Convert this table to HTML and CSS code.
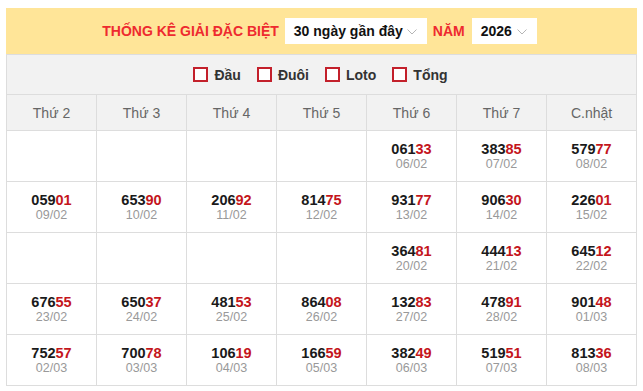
FILE: index.html
```html
<!DOCTYPE html>
<html lang="vi">
<head>
<meta charset="utf-8">
<link rel="stylesheet" href="styles.css">
</head>
<body>
<div class="box">
  <div class="topbar">
    <span class="title">THỐNG KÊ GIẢI ĐẶC BIỆT</span>
    <div class="select sel-range"><span>30 ngày gần đây</span><svg class="chev" width="10" height="6" viewBox="0 0 10 6"><path d="M0.5 0.5 L5 5 L9.5 0.5" fill="none" stroke="#b5b5b5" stroke-width="1"/></svg></div>
    <span class="title">NĂM</span>
    <div class="select sel-year"><span>2026</span><svg class="chev" width="10" height="6" viewBox="0 0 10 6"><path d="M0.5 0.5 L5 5 L9.5 0.5" fill="none" stroke="#b5b5b5" stroke-width="1"/></svg></div>
  </div>
  <div class="filters">
    <label class="chk"><span class="sq"></span>Đầu</label>
    <label class="chk"><span class="sq"></span>Đuôi</label>
    <label class="chk"><span class="sq"></span>Loto</label>
    <label class="chk"><span class="sq"></span>Tổng</label>
  </div>
  <div class="grid">
    <div class="hd">Thứ 2</div><div class="hd">Thứ 3</div><div class="hd">Thứ 4</div><div class="hd">Thứ 5</div><div class="hd">Thứ 6</div><div class="hd">Thứ 7</div><div class="hd">C.nhật</div>

    <div class="c"></div><div class="c"></div><div class="c"></div><div class="c"></div>
    <div class="c"><b>061<i>33</i></b><span>06/02</span></div>
    <div class="c"><b>383<i>85</i></b><span>07/02</span></div>
    <div class="c"><b>579<i>77</i></b><span>08/02</span></div>

    <div class="c"><b>059<i>01</i></b><span>09/02</span></div>
    <div class="c"><b>653<i>90</i></b><span>10/02</span></div>
    <div class="c"><b>206<i>92</i></b><span>11/02</span></div>
    <div class="c"><b>814<i>75</i></b><span>12/02</span></div>
    <div class="c"><b>931<i>77</i></b><span>13/02</span></div>
    <div class="c"><b>906<i>30</i></b><span>14/02</span></div>
    <div class="c"><b>226<i>01</i></b><span>15/02</span></div>

    <div class="c"></div><div class="c"></div><div class="c"></div><div class="c"></div>
    <div class="c"><b>364<i>81</i></b><span>20/02</span></div>
    <div class="c"><b>444<i>13</i></b><span>21/02</span></div>
    <div class="c"><b>645<i>12</i></b><span>22/02</span></div>

    <div class="c"><b>676<i>55</i></b><span>23/02</span></div>
    <div class="c"><b>650<i>37</i></b><span>24/02</span></div>
    <div class="c"><b>481<i>53</i></b><span>25/02</span></div>
    <div class="c"><b>864<i>08</i></b><span>26/02</span></div>
    <div class="c"><b>132<i>83</i></b><span>27/02</span></div>
    <div class="c"><b>478<i>91</i></b><span>28/02</span></div>
    <div class="c"><b>901<i>48</i></b><span>01/03</span></div>

    <div class="c"><b>752<i>57</i></b><span>02/03</span></div>
    <div class="c"><b>700<i>78</i></b><span>03/03</span></div>
    <div class="c"><b>106<i>19</i></b><span>04/03</span></div>
    <div class="c"><b>166<i>59</i></b><span>05/03</span></div>
    <div class="c"><b>382<i>49</i></b><span>06/03</span></div>
    <div class="c"><b>519<i>51</i></b><span>07/03</span></div>
    <div class="c"><b>813<i>36</i></b><span>08/03</span></div>
  </div>
</div>
</body>
</html>
```

FILE: styles.css
```css
* { box-sizing: border-box; }
html, body { margin: 0; padding: 0; background: #fff; }
body {
  font-family: "Liberation Sans", Arial, sans-serif;
  padding: 8px 6px 0 6px;
}
.box { width: 631px; }
.topbar {
  height: 46px;
  background: #ffe598;
  display: flex;
  align-items: center;
  justify-content: center;
  gap: 6px;
  padding-right: 4px;
}
.title {
  color: #ee2a2f;
  font-weight: bold;
  font-size: 14px;
}
.select {
  height: 26px;
  background: #fff;
  display: flex;
  align-items: center;
  justify-content: space-between;
  font-weight: bold;
  font-size: 14px;
  color: #111;
  padding: 0 10px 0 9px;
}
.sel-range { width: 142px; }
.sel-year { width: 65px; margin-left: 1px; }
.chev { display: block; margin-top: 1px; }
.filters {
  height: 40px;
  background: #f2f2f2;
  border: 1px solid #dddddd;
  border-bottom: none;
  display: flex;
  align-items: center;
  justify-content: center;
  gap: 16px;
  padding-right: 2px;
}
.chk {
  display: flex;
  align-items: center;
  gap: 6px;
  font-weight: bold;
  font-size: 14px;
  color: #333;
}
.sq {
  width: 15px;
  height: 15px;
  border: 2px solid #c3202b;
  background: #fff;
}
.grid {
  display: grid;
  grid-template-columns: repeat(7, 90px);
  border-top: 1px solid #dddddd;
  border-left: 1px solid #dddddd;
}
.hd {
  height: 36px;
  background: #f2f2f2;
  border-right: 1px solid #dddddd;
  border-bottom: 1px solid #dddddd;
  display: flex;
  align-items: center;
  justify-content: center;
  font-size: 14px;
  color: #666;
}
.c {
  height: 51px;
  border-right: 1px solid #dddddd;
  border-bottom: 1px solid #dddddd;
  display: flex;
  flex-direction: column;
  align-items: center;
  justify-content: center;
  background: #fff;
}
.c b {
  font-size: 14.5px;
  font-weight: bold;
  color: #1a1a1a;
  line-height: 16px;
}
.c i {
  font-style: normal;
  color: #c4161c;
}
.c span {
  font-size: 12.5px;
  color: #999;
  line-height: 14px;
}
```
